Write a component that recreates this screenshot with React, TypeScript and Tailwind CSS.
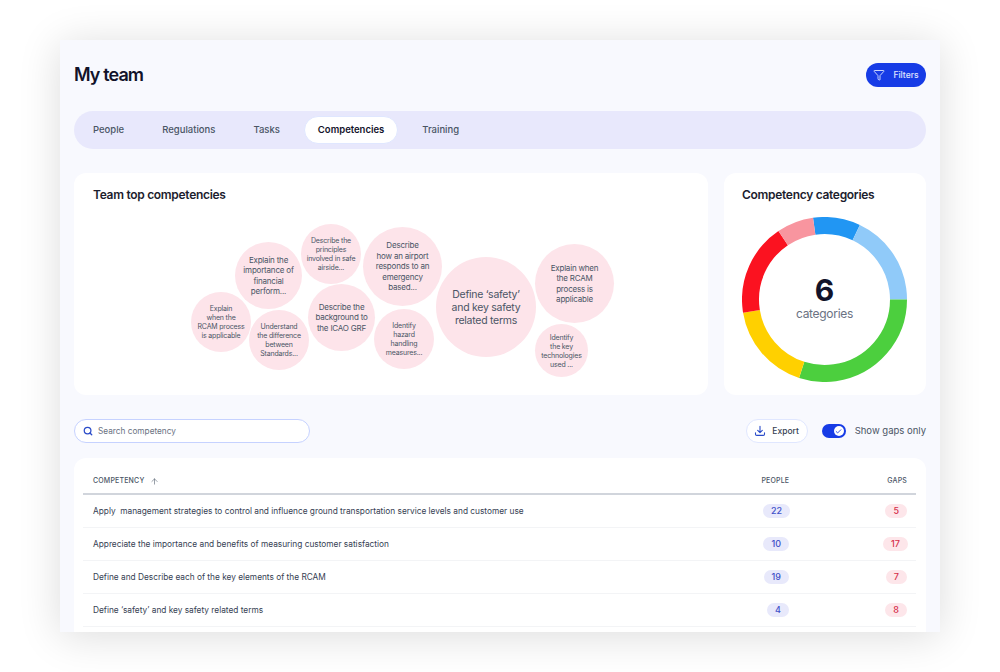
import { ArrowUp, Check, Funnel, Search } from "lucide-react";

const tabs = ["People", "Regulations", "Tasks", "Competencies", "Training"];

const small = "text-[7px] leading-[9px]";
const medium = "text-[8px] leading-[10.5px]";

const bubbles = [
  { x: 117, y: 119, d: 60, cls: small, lines: ["Explain", "when the", "RCAM process", "is applicable"] },
  { x: 161, y: 69, d: 67, cls: medium, lines: ["Explain the", "importance of", "financial", "perform..."] },
  { x: 227, y: 51, d: 60, cls: small, lines: ["Describe the", "principles", "involved in safe", "airside..."] },
  { x: 289, y: 54, d: 79, cls: medium, lines: ["Describe", "how an airport", "responds to an", "emergency", "based..."] },
  { x: 175, y: 137, d: 60, cls: small, lines: ["Understand", "the difference", "between", "Standards..."] },
  { x: 234, y: 111, d: 67, cls: medium, lines: ["Describe the", "background to", "the ICAO GRF"] },
  { x: 300, y: 136, d: 60, cls: small, lines: ["Identify", "hazard", "handling", "measures..."] },
  { x: 362, y: 84, d: 100, cls: "text-[10.5px] leading-[13px]", lines: ["Define ‘safety’", "and key safety", "related terms"] },
  { x: 461, y: 71, d: 79, cls: medium, lines: ["Explain when", "the RCAM", "process is", "applicable"] },
  { x: 461, y: 151, d: 53, cls: small, lines: ["Identify", "the key", "technologies", "used ..."] },
];

// Angles are degrees clockwise from the top of the ring.
const segments = [
  { from: -8, to: 25.4, color: "#2196f3" },
  { from: 25.4, to: 90, color: "#90caf9" },
  { from: 90, to: 198, color: "#4ccf3e" },
  { from: 198, to: 260.7, color: "#ffd000" },
  { from: 260.7, to: 326, color: "#fb1220" },
  { from: 326, to: 352, color: "#f8959f" },
];

const rows = [
  { name: "Apply  management strategies to control and influence ground transportation service levels and customer use", people: 22, gaps: 5 },
  { name: "Appreciate the importance and benefits of measuring customer satisfaction", people: 10, gaps: 17 },
  { name: "Define and Describe each of the key elements of the RCAM", people: 19, gaps: 7 },
  { name: "Define ‘safety’ and key safety related terms", people: 4, gaps: 8 },
];

function Donut() {
  return (
    <div className="relative mt-3.5 h-[165px] w-[165px]">
      <svg viewBox="0 0 165 165" className="h-full w-full">
        <g transform="rotate(-98 82.5 82.5)">
          {segments.map((s) => (
            <circle
              key={s.color}
              cx="82.5"
              cy="82.5"
              r="74"
              fill="none"
              stroke={s.color}
              strokeWidth="17"
              pathLength={360}
              strokeDasharray={`${s.to - s.from} 360`}
              strokeDashoffset={-(s.from + 8)}
            />
          ))}
        </g>
      </svg>
      <div className="absolute inset-0 flex flex-col items-center justify-center pb-1">
        <span className="text-3xl leading-8 font-bold text-[#12132a]">6</span>
        <span className="text-xs leading-4 tracking-tight text-gray-500">categories</span>
      </div>
    </div>
  );
}

export default function App() {
  return (
    <div className="h-168 w-250 overflow-hidden bg-white pt-10 pl-15 font-['Inter',sans-serif]">
      <div className="flex h-148 w-220 flex-col bg-[#f8f9fe] px-3.5 shadow-[0_4px_40px_rgba(0,0,0,0.14)]">
        <header className="mt-5.75 flex h-6 items-center justify-between">
          <h1 className="text-lg font-semibold tracking-tighter text-[#12132a]">My team</h1>
          <button className="flex h-6 w-15 items-center justify-center gap-2 rounded-full bg-[#173ce6] text-[8.5px] font-medium text-indigo-100">
            <Funnel size={12} strokeWidth={1.75} />
            Filters
          </button>
        </header>

        <nav className="mt-6 flex h-9.5 items-center gap-2.5 rounded-full bg-[#e8e8fc] px-1.25">
          {tabs.map((t) => (
            <span
              key={t}
              className={
                t === "Competencies"
                  ? "flex h-7 items-center rounded-full border border-indigo-100 bg-white px-3.25 text-[9.5px] font-semibold text-[#12132a]"
                  : "flex h-7 items-center px-3.5 text-[9.5px] font-medium text-gray-600"
              }
            >
              {t}
            </span>
          ))}
        </nav>

        <section className="mt-6 flex h-[222px] gap-4">
          <div className="relative flex-1 rounded-xl bg-white px-4.75 pt-3.5">
            <h2 className="text-xs font-semibold tracking-tight text-[#1c1d2e]">Team top competencies</h2>
            {bubbles.map((b) => (
              <div
                key={b.lines.join(" ")}
                className={`absolute flex items-center justify-center rounded-full bg-[#fde4ea] text-center tracking-tight text-gray-600 ${b.cls}`}
                style={{ left: b.x, top: b.y, width: b.d, height: b.d }}
              >
                <span>
                  {b.lines.map((l) => (
                    <span key={l} className="block whitespace-nowrap">
                      {l}
                    </span>
                  ))}
                </span>
              </div>
            ))}
          </div>
          <div className="flex w-[202px] flex-col rounded-xl bg-white px-4.5 pt-3.5">
            <h2 className="text-xs font-semibold tracking-tight text-[#1c1d2e]">Competency categories</h2>
            <Donut />
          </div>
        </section>

        <section className="mt-6 flex h-6 items-center justify-between">
          <div className="flex h-6 w-59 items-center gap-1.25 rounded-full border border-indigo-200 bg-white px-2">
            <Search size={10} strokeWidth={3} className="text-[#2b4cc9]" />
            <span className="text-[8.25px] text-gray-500">Search competency</span>
          </div>
          <div className="flex items-center gap-3.5">
            <button className="flex h-6 w-15.5 items-center justify-center gap-1.5 rounded-full border border-indigo-100 bg-white text-[8.5px] font-medium text-gray-700">
              <svg viewBox="0 0 12 12" className="h-3 w-3 text-[#2b4cc9]" fill="none" stroke="currentColor" strokeWidth="1.1" strokeLinecap="round" strokeLinejoin="round">
                <path d="M6 1.2v6.4M3.7 5.4 6 7.7l2.3-2.3M1.5 7.8v1.4c0 .7.5 1.2 1.2 1.2h6.6c.7 0 1.2-.5 1.2-1.2V7.8" />
              </svg>
              Export
            </button>
            <div className="flex items-center gap-2.25">
              <span className="flex h-3.5 w-6 items-center justify-end rounded-full bg-[#173ce6] px-0.5">
                <span className="flex h-2.5 w-2.5 items-center justify-center rounded-full bg-white">
                  <Check size={7} strokeWidth={3} className="text-[#173ce6]" />
                </span>
              </span>
              <span className="text-[9.5px] text-gray-600">Show gaps only</span>
            </div>
          </div>
        </section>

        <section className="mt-3.75 min-h-0 flex-1 overflow-hidden rounded-t-xl bg-white pr-2.5 pl-2.25">
          <div className="flex h-9.25 items-center justify-between border-b-2 border-gray-300 pt-3 pr-2.25 pl-2.5 text-[7px] font-medium tracking-wide text-gray-600">
            <span className="flex items-center gap-1.5">
              COMPETENCY
              <ArrowUp size={9} strokeWidth={1.5} />
            </span>
            <span className="flex items-center">
              <span className="mr-24.5">PEOPLE</span>
              <span>GAPS</span>
            </span>
          </div>
          {rows.map((r) => (
            <div key={r.name} className="flex h-8.25 items-center justify-between border-b border-gray-100 pr-2.25 pl-2.5 text-[8.3px] text-gray-700">
              <span className="whitespace-pre">{r.name}</span>
              <span className="flex items-center">
                <span className="mr-23.5 w-6.5 text-right">
                  <span className="inline-block min-w-5 rounded-full bg-[#e8e9fb] px-2 text-center text-[9px] leading-3.5 font-medium text-[#3f51c9]">{r.people}</span>
                </span>
                <span className="w-6 text-right">
                  <span className="inline-block min-w-5 rounded-full bg-[#fde6ea] px-2 text-center text-[9px] leading-3.5 font-medium text-[#d6304a]">{r.gaps}</span>
                </span>
              </span>
            </div>
          ))}
        </section>
      </div>
    </div>
  );
}
